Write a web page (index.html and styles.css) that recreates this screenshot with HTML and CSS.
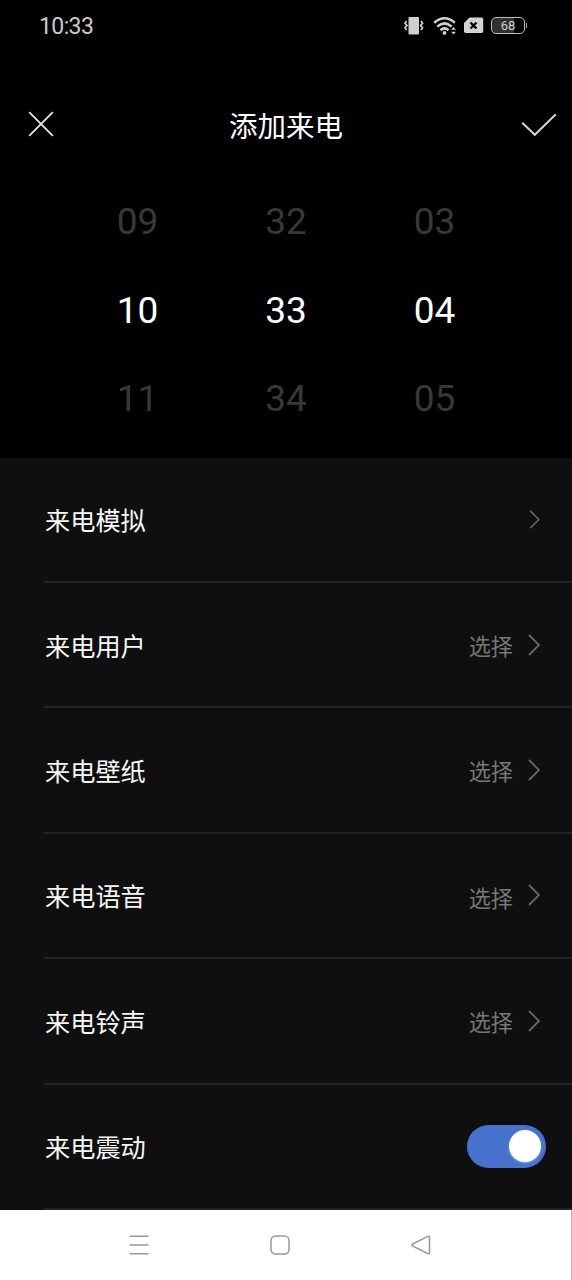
FILE: index.html
```html
<!DOCTYPE html>
<html lang="zh-CN">
<head>
<meta charset="utf-8">
<title>添加来电</title>
<link rel="stylesheet" href="styles.css">
</head>
<body>
<div class="screen">
  <div class="status">
    <span class="clock">10:33</span>
    <div class="indicators">
      <svg class="vibrate" width="20" height="20" viewBox="0 0 20 20"><rect x="4.500" y="1" width="10.500" height="17.500" rx="1" fill="#cfcfcf"/><path d="M2.500 5 1 7.300l2 2.200-2 2.200 1.500 2.300M17 5l1.500 2.300-2 2.200 2 2.200-1.500 2.300" fill="none" stroke="#cfcfcf" stroke-width="1.700"/></svg>
      <svg class="wifi" width="24" height="20" viewBox="0 0 24 20"><g fill="none" stroke="#d4d4d4" stroke-width="2.500"><path d="M1.200 6.700Q11.500-2.300 21.800 6.700"/><path d="M4.300 10.600Q11.500 4.100 18.700 10.600"/><path d="M7.500 14.200Q11.500 10.600 15.500 14.200"/></g><circle cx="11.500" cy="16.900" r="1.900" fill="#d4d4d4"/><path d="M18 13.800l2.500-2.800 2.500 2.800zM18 15.700l2.500 2.800 2.500-2.800z" fill="#c8c8c8"/></svg>
      <svg class="sim" width="20" height="17" viewBox="0 0 20 17"><path d="M5.500.5H17.500a1.700 1.700 0 0 1 1.700 1.700v12.100a1.700 1.700 0 0 1-1.700 1.700H1.700A1.700 1.700 0 0 1 0 14.300V6z" fill="#d3d3d3"/><path d="M6.500 5.500l6 6M12.500 5.500l-6 6" stroke="#000" stroke-width="2.300"/></svg>
      <div class="battery"><span>68</span></div>
    </div>
  </div>
  <header class="titlebar">
    <svg width="26" height="26" viewBox="0 0 26 26"><path d="M1.200 1.200l23.600 23.600M24.800 1.200L1.200 24.800" stroke="#e2e2e2" stroke-width="1.900"/></svg>
    <h1>添加来电</h1>
    <svg class="confirm" width="36" height="24" viewBox="0 0 36 24"><path d="M1.200 9.800L13.800 21.800 34.800 1.200" fill="none" stroke="#d4d4d4" stroke-width="2"/></svg>
  </header>
  <section class="picker">
    <div class="wheel"><span>09</span><span class="current">10</span><span>11</span></div>
    <div class="wheel"><span>32</span><span class="current">33</span><span>34</span></div>
    <div class="wheel"><span>03</span><span class="current">04</span><span>05</span></div>
  </section>
  <main class="options">
    <div class="option"><span class="label">来电模拟</span><svg class="chevron small" viewBox="0 0 12 22"><path d="M1 1l10 10L1 21"/></svg></div>
    <div class="option"><span class="label">来电用户</span><span class="value">选择</span><svg class="chevron" viewBox="0 0 12 22"><path d="M1 1l10 10L1 21"/></svg></div>
    <div class="option"><span class="label">来电壁纸</span><span class="value">选择</span><svg class="chevron" viewBox="0 0 12 22"><path d="M1 1l10 10L1 21"/></svg></div>
    <div class="option"><span class="label">来电语音</span><span class="value low">选择</span><svg class="chevron" viewBox="0 0 12 22"><path d="M1 1l10 10L1 21"/></svg></div>
    <div class="option"><span class="label">来电铃声</span><span class="value">选择</span><svg class="chevron" viewBox="0 0 12 22"><path d="M1 1l10 10L1 21"/></svg></div>
    <div class="option"><span class="label">来电震动</span><div class="toggle"><div class="knob"></div></div></div>
  </main>
  <nav class="navbar">
    <svg width="20" height="20" viewBox="0 0 20 20"><path d="M.5 1.200h19M.5 10h19M.5 18.700h19"/></svg>
    <svg width="20" height="20" viewBox="0 0 20 20"><rect x="1" y="1" width="18" height="18" rx="4.500"/></svg>
    <svg width="20" height="20" viewBox="0 0 20 20"><path d="M1.800 9Q0 10 1.800 11L16.700 18.600Q18.500 19.300 18.500 17.500V2.500Q18.500.7 16.700 1.400Z"/></svg>
  </nav>
</div>
</body>
</html>
```
FILE: styles.css
```css
body {
  margin: 0;
  background: #000;
  font-family: Roboto, "Noto Sans CJK SC", sans-serif;
}
.screen {
  width: 572px;
  height: 1280px;
  display: flex;
  flex-direction: column;
  overflow: hidden;
  color: #fff;
}
.status {
  height: 51px;
  box-sizing: border-box;
  padding: 0 47px 0 39px;
  display: flex;
  align-items: center;
  justify-content: space-between;
}
.clock {
  padding-top: 2px;
  font-size: 23px;
  letter-spacing: -0.6px;
  line-height: 27px;
  color: #cbcbcb;
}
.indicators {
  display: flex;
  align-items: center;
}
.wifi { margin-left: 9px; }
.sim { margin-left: 7px; }
.battery {
  position: relative;
  width: 34px;
  height: 17px;
  margin-left: 7px;
  box-sizing: border-box;
  border: 1.5px solid #bdbdbd;
  border-radius: 5px;
  background: linear-gradient(90deg, #303030 68%, #000 68%);
  color: #d0d0d0;
  font-size: 13px;
  line-height: 16px;
  text-align: center;
}
.battery::after {
  content: "";
  position: absolute;
  right: -3px;
  top: 5px;
  width: 1px;
  height: 5px;
  background: #aaa;
}
.titlebar {
  height: 126px;
  box-sizing: border-box;
  padding: 19px 15px 0 28px;
  display: grid;
  grid-template-columns: 36px 1fr 36px;
  align-items: center;
}
.confirm { padding-top: 2px; }
h1 {
  margin: 0;
  padding: 9px 13px 0 0;
  font-size: 28.5px;
  line-height: 40px;
  font-weight: 400;
  text-align: center;
}
.picker {
  height: 280.5px;
  box-sizing: border-box;
  padding-top: 1px;
  display: grid;
  grid-template-columns: repeat(3, 148.5px);
  justify-content: center;
}
.wheel {
  display: flex;
  flex-direction: column;
  text-align: center;
  font-size: 37px;
  line-height: 88.6px;
  color: #383838;
}
.current { color: #fff; }
.options {
  height: 752.5px;
  background: #0f0f0f;
  display: grid;
  grid-template-rows: repeat(6, 1fr);
}
.option {
  margin-left: 44px;
  padding: 0 32px 0 1px;
  display: flex;
  align-items: center;
  border-bottom: 2px solid #232323;
}
.label {
  flex: 1;
  padding-top: 6px;
  font-size: 25.2px;
  line-height: 36px;
  color: #f7f7f7;
}
.value {
  padding-top: 4px;
  margin-right: 15px;
  font-size: 22.2px;
  line-height: 32px;
  color: #777;
}
.low { padding-top: 7px; }
.chevron {
  width: 12px;
  height: 22px;
  fill: none;
  stroke: #666;
  stroke-width: 1.8;
}
.small {
  width: 11px;
  height: 19px;
}
.toggle {
  width: 79px;
  height: 43px;
  margin-right: -6px;
  padding: 0 5px;
  box-sizing: border-box;
  border-radius: 22px;
  background: #4672ce;
  display: flex;
  align-items: center;
  justify-content: flex-end;
}
.knob {
  width: 32px;
  height: 32px;
  border-radius: 50%;
  background: #fff;
  box-shadow: 0 1px 2px #8eace8;
}
.navbar {
  height: 70px;
  box-sizing: border-box;
  padding-left: 129px;
  border-right: 1px solid #b5b5b5;
  display: flex;
  align-items: center;
  gap: 121px;
  background: #fff;
}
.navbar svg {
  fill: none;
  stroke: #999;
  stroke-width: 1.5;
}
```
